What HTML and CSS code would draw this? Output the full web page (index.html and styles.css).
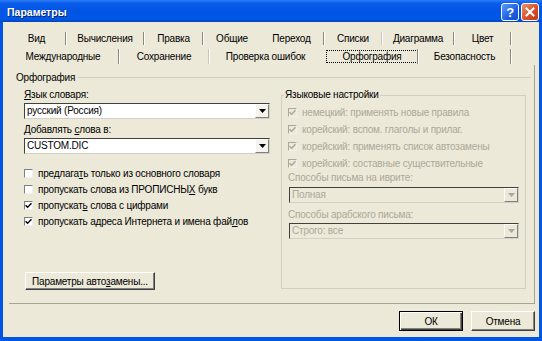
FILE: index.html
```html
<!DOCTYPE html>
<html lang="ru">
<head>
<meta charset="utf-8">
<title>Параметры</title>
<link rel="stylesheet" href="styles.css">
</head>
<body>
<div class="window">
  <div class="titlebar">
    <span class="title">Параметры</span>
    <span class="tb-btn tb-help">?</span>
    <span class="tb-btn tb-close"><svg width="10" height="10" viewBox="0 0 10 10"><path d="M1.5 1.5 L8.5 8.5 M8.5 1.5 L1.5 8.5" stroke="#fff" stroke-width="2" stroke-linecap="square"/></svg></span>
  </div>
  <div class="client">
    <div class="tabs">
      <div class="tabrow">
        <span class="tab w57">Вид</span><span class="sep"></span>
        <span class="tab w76">Вычисления</span><span class="sep"></span>
        <span class="tab w57">Правка</span><span class="sep"></span>
        <span class="tab w56">Общие</span>
        <span class="tab w63">Переход</span><span class="sep"></span>
        <span class="tab w56">Списки</span><span class="sep light"></span>
        <span class="tab w70">Диаграмма</span><span class="sep"></span>
        <span class="tab w55">Цвет</span><span class="sep"></span>
      </div>
      <div class="tabrow row2">
        <span class="tab w110">Международные</span><span class="sep"></span>
        <span class="tab w88">Сохранение</span><span class="sep light"></span>
        <span class="tab w111">Проверка ошибок</span>
        <span class="tab w96"><span class="focus">Орфография</span></span><span class="sep"></span>
        <span class="tab w91">Безопасность</span><span class="sep"></span>
      </div>
    </div>
    <div class="page">
      <div class="header">
        <span class="header-label">Орфография</span>
        <span class="header-line"></span>
      </div>
      <div class="columns">
        <div class="left">
          <div class="label"><u>Я</u>зык словаря:</div>
          <div class="combo"><span class="combo-text">русский (Россия)</span><span class="arrow"><svg width="7" height="4" viewBox="0 0 7 4"><path d="M0 0 H7 L3.5 4 Z" fill="#000"/></svg></span></div>
          <div class="label gap5">Добавлять <u>с</u>лова в:</div>
          <div class="combo"><span class="combo-text">CUSTOM.DIC</span><span class="arrow"><svg width="7" height="4" viewBox="0 0 7 4"><path d="M0 0 H7 L3.5 4 Z" fill="#000"/></svg></span></div>
          <div class="checks">
            <div class="check"><span class="box"></span><span>предлага<u>т</u>ь только из основного словаря</span></div>
            <div class="check"><span class="box"></span><span>пропускать слова из ПРОПИСНЫ<u>Х</u> букв</span></div>
            <div class="check"><span class="box"><svg width="7" height="7" viewBox="0 0 7 7"><path d="M0.5 3.2 L2.6 5.3 L6.5 1.2" stroke="#000" stroke-width="1.5" fill="none"/></svg></span><span>пропускат<u>ь</u> слова с цифрами</span></div>
            <div class="check"><span class="box"><svg width="7" height="7" viewBox="0 0 7 7"><path d="M0.5 3.2 L2.6 5.3 L6.5 1.2" stroke="#000" stroke-width="1.5" fill="none"/></svg></span><span>пропускать адреса Интернета и имена фай<u>л</u>ов</span></div>
          </div>
          <div class="btn autofix">Параметры авто<u>з</u>амены...</div>
        </div>
        <fieldset class="group">
          <legend>Языковые настройки</legend>
          <div class="check dis"><span class="box"><svg width="7" height="7" viewBox="0 0 7 7"><path d="M0.5 3.2 L2.6 5.3 L6.5 1.2" stroke="#ACA899" stroke-width="1.5" fill="none"/></svg></span><span>немецкий: применять новые правила</span></div>
          <div class="check dis"><span class="box"><svg width="7" height="7" viewBox="0 0 7 7"><path d="M0.5 3.2 L2.6 5.3 L6.5 1.2" stroke="#ACA899" stroke-width="1.5" fill="none"/></svg></span><span>корейский: вспом. глаголы и прилаг.</span></div>
          <div class="check dis"><span class="box"><svg width="7" height="7" viewBox="0 0 7 7"><path d="M0.5 3.2 L2.6 5.3 L6.5 1.2" stroke="#ACA899" stroke-width="1.5" fill="none"/></svg></span><span>корейский: применять список автозамены</span></div>
          <div class="check dis"><span class="box"><svg width="7" height="7" viewBox="0 0 7 7"><path d="M0.5 3.2 L2.6 5.3 L6.5 1.2" stroke="#ACA899" stroke-width="1.5" fill="none"/></svg></span><span>корейский: составные существительные</span></div>
          <div class="label dis-text">Способы письма на иврите:</div>
          <div class="combo dis-combo mt3"><span class="combo-text">Полная</span><span class="arrow"><svg width="7" height="4" viewBox="0 0 7 4"><path d="M0 0 H7 L3.5 4 Z" fill="#ACA899"/></svg></span></div>
          <div class="label dis-text gap6">Способы арабского письма:</div>
          <div class="combo dis-combo"><span class="combo-text">Строго: все</span><span class="arrow"><svg width="7" height="4" viewBox="0 0 7 4"><path d="M0 0 H7 L3.5 4 Z" fill="#ACA899"/></svg></span></div>
        </fieldset>
      </div>
    </div>
    <div class="footer">
      <div class="btn default">ОК</div>
      <div class="btn">Отмена</div>
    </div>
  </div>
</div>
</body>
</html>
```
FILE: styles.css
```css
* { box-sizing: border-box; }
html, body { margin: 0; padding: 0; }
body {
  width: 542px;
  height: 341px;
  overflow: hidden;
  font-family: "Liberation Sans", Arial, sans-serif;
  font-size: 10px;
  letter-spacing: -0.2px;
  color: #000;
}
.window {
  width: 542px;
  height: 341px;
  background: #0055E5;
  display: flex;
  flex-direction: column;
}
.titlebar {
  height: 22px;
  flex: none;
  display: flex;
  align-items: center;
  padding: 0 3px 0 7px;
  background: linear-gradient(#2C7CF6 0%, #0A5CEA 15%, #0054E3 55%, #0058E8 85%, #0045C0 100%);
}
.title {
  flex: 1;
  color: #fff;
  font-weight: bold;
  font-size: 10.5px;
  letter-spacing: 0;
  text-shadow: 1px 1px 0 #0A246A;
  padding-top: 2px;
}
.tb-btn {
  width: 18px;
  height: 18px;
  border: 1px solid #fff;
  border-radius: 3px;
  display: flex;
  align-items: center;
  justify-content: center;
  margin-top: 2px;
}
.tb-help {
  margin-right: 2px;
  background: linear-gradient(135deg, #5A9CFF, #1D5FE0 60%, #1550D0);
  color: #fff;
  font-weight: bold;
  font-size: 13px;
  font-family: "Liberation Sans", Arial, sans-serif;
}
.tb-close {
  background: linear-gradient(135deg, #F0906A, #D8502A 55%, #C03A18);
}
.client {
  flex: 1;
  margin: 0 3px 4px 3px;
  background: #ECE9D8;
  display: flex;
  flex-direction: column;
}
.tabs {
  padding: 7px 0 0 5px;
}
.tabrow {
  display: flex;
  height: 18px;
  align-items: center;
}
.tab {
  display: flex;
  justify-content: center;
  align-items: center;
  height: 18px;
  white-space: nowrap;
}
.w55 { width: 55px; } .w56 { width: 56px; } .w57 { width: 57px; }
.w63 { width: 63px; } .w70 { width: 70px; } .w76 { width: 76px; }
.w88 { width: 88px; } .w91 { width: 91px; } .w96 { width: 96px; }
.w110 { width: 110px; } .w111 { width: 111px; }
.sep {
  width: 2px;
  height: 13px;
  border-left: 1px solid #8C897C;
  border-right: 1px solid #FFFFFF;
}
.row2 .sep { height: 15px; }
.sep.light { border-left-color: #C9C6B6; }
.focus {
  border: 1px dotted #000;
  padding: 0 15px;
  line-height: 11px;
  margin-left: 6px;
}
.page {
  margin: 0 4px 0 6px;
  height: 239px;
  border-right: 1px solid #A5A497;
  border-bottom: 1px solid #A5A497;
  padding-top: 6px;
}
.header {
  display: flex;
  align-items: center;
  height: 12px;
  padding-left: 7px;
}
.header-line {
  flex: 1;
  height: 1px;
  background: #D0D0BF;
  margin: 0 3px 0 3px;
}
.columns {
  display: flex;
  margin-top: 6px;
  padding-left: 15px;
  gap: 11px;
}
.left {
  width: 246px;
  display: flex;
  flex-direction: column;
}
.label {
  line-height: 12px;
  height: 12px;
  white-space: nowrap;
}
.gap5 { margin-top: 5px; }
.gap6 { margin-top: 6px; }
.mt3 { margin-top: 3px !important; }
.combo {
  margin-top: 2px;
  height: 16px;
  display: flex;
  align-items: stretch;
  background: #fff;
  border-top: 1px solid #404040;
  border-left: 1px solid #404040;
  border-right: 1px solid #D4D0C8;
  border-bottom: 1px solid #D4D0C8;
}
.combo-text {
  flex: 1;
  padding-left: 2px;
  line-height: 14px;
  white-space: nowrap;
}
.arrow {
  width: 14px;
  display: flex;
  align-items: center;
  justify-content: center;
  background: #F4F3EE;
  border-right: 1px solid #808080;
  border-bottom: 1px solid #808080;
  border-left: 1px solid #fff;
  border-top: 1px solid #fff;
}
.checks {
  margin-top: 11px;
  display: flex;
  flex-direction: column;
}
.check {
  display: flex;
  align-items: center;
  height: 16px;
  gap: 5px;
  white-space: nowrap;
}
.box {
  width: 9px;
  height: 9px;
  flex: none;
  background: #fff;
  border-top: 1px solid #808080;
  border-left: 1px solid #808080;
  border-right: 1px solid #F0F0F0;
  border-bottom: 1px solid #F0F0F0;
  display: flex;
  align-items: center;
  justify-content: center;
}
.btn {
  height: 18px;
  display: flex;
  align-items: center;
  justify-content: center;
  background: #ECE9D8;
  border-top: 1px solid #fff;
  border-left: 1px solid #fff;
  border-right: 1px solid #404040;
  border-bottom: 1px solid #404040;
  box-shadow: inset -1px -1px 0 #808080;
  white-space: nowrap;
}
.autofix {
  margin-top: 43px;
  margin-left: 1px;
  width: 130px;
}
.group {
  margin: 0;
  width: 245px;
  height: 200px;
  border: 1px solid #D0D0BF;
  padding: 0 6px 0 6px;
  min-width: 0;
}
.group legend {
  padding: 0 1px;
  margin-left: -4px;
  line-height: 12px;
  height: 12px;
}
.group .check { height: 17px; }
.group .check:first-of-type { margin-top: 3px; }
.dis { color: #ACA899; }
.dis .box {
  background: #ECE9D8;
  border-top-color: #ACA899;
  border-left-color: #ACA899;
}
.dis-text { color: #ACA899; }
.group .label:first-of-type { margin-top: 0; }
.dis-combo {
  margin-left: 1px;
  width: 230px;
  background: #ECE9D8;
  color: #ACA899;
}
.dis-combo .arrow { background: #ECE9D8; }
.footer {
  display: flex;
  justify-content: flex-end;
  gap: 8px;
  padding: 7px 4px 0 0;
}
.footer .btn {
  width: 64px;
  height: 20px;
}
.footer .btn.default {
  border: 1px solid #000;
  box-shadow: inset 1px 1px 0 #fff, inset -1px -1px 0 #404040, inset -2px -2px 0 #808080;
}
u { text-decoration: underline; text-underline-offset: 1px; }
```
